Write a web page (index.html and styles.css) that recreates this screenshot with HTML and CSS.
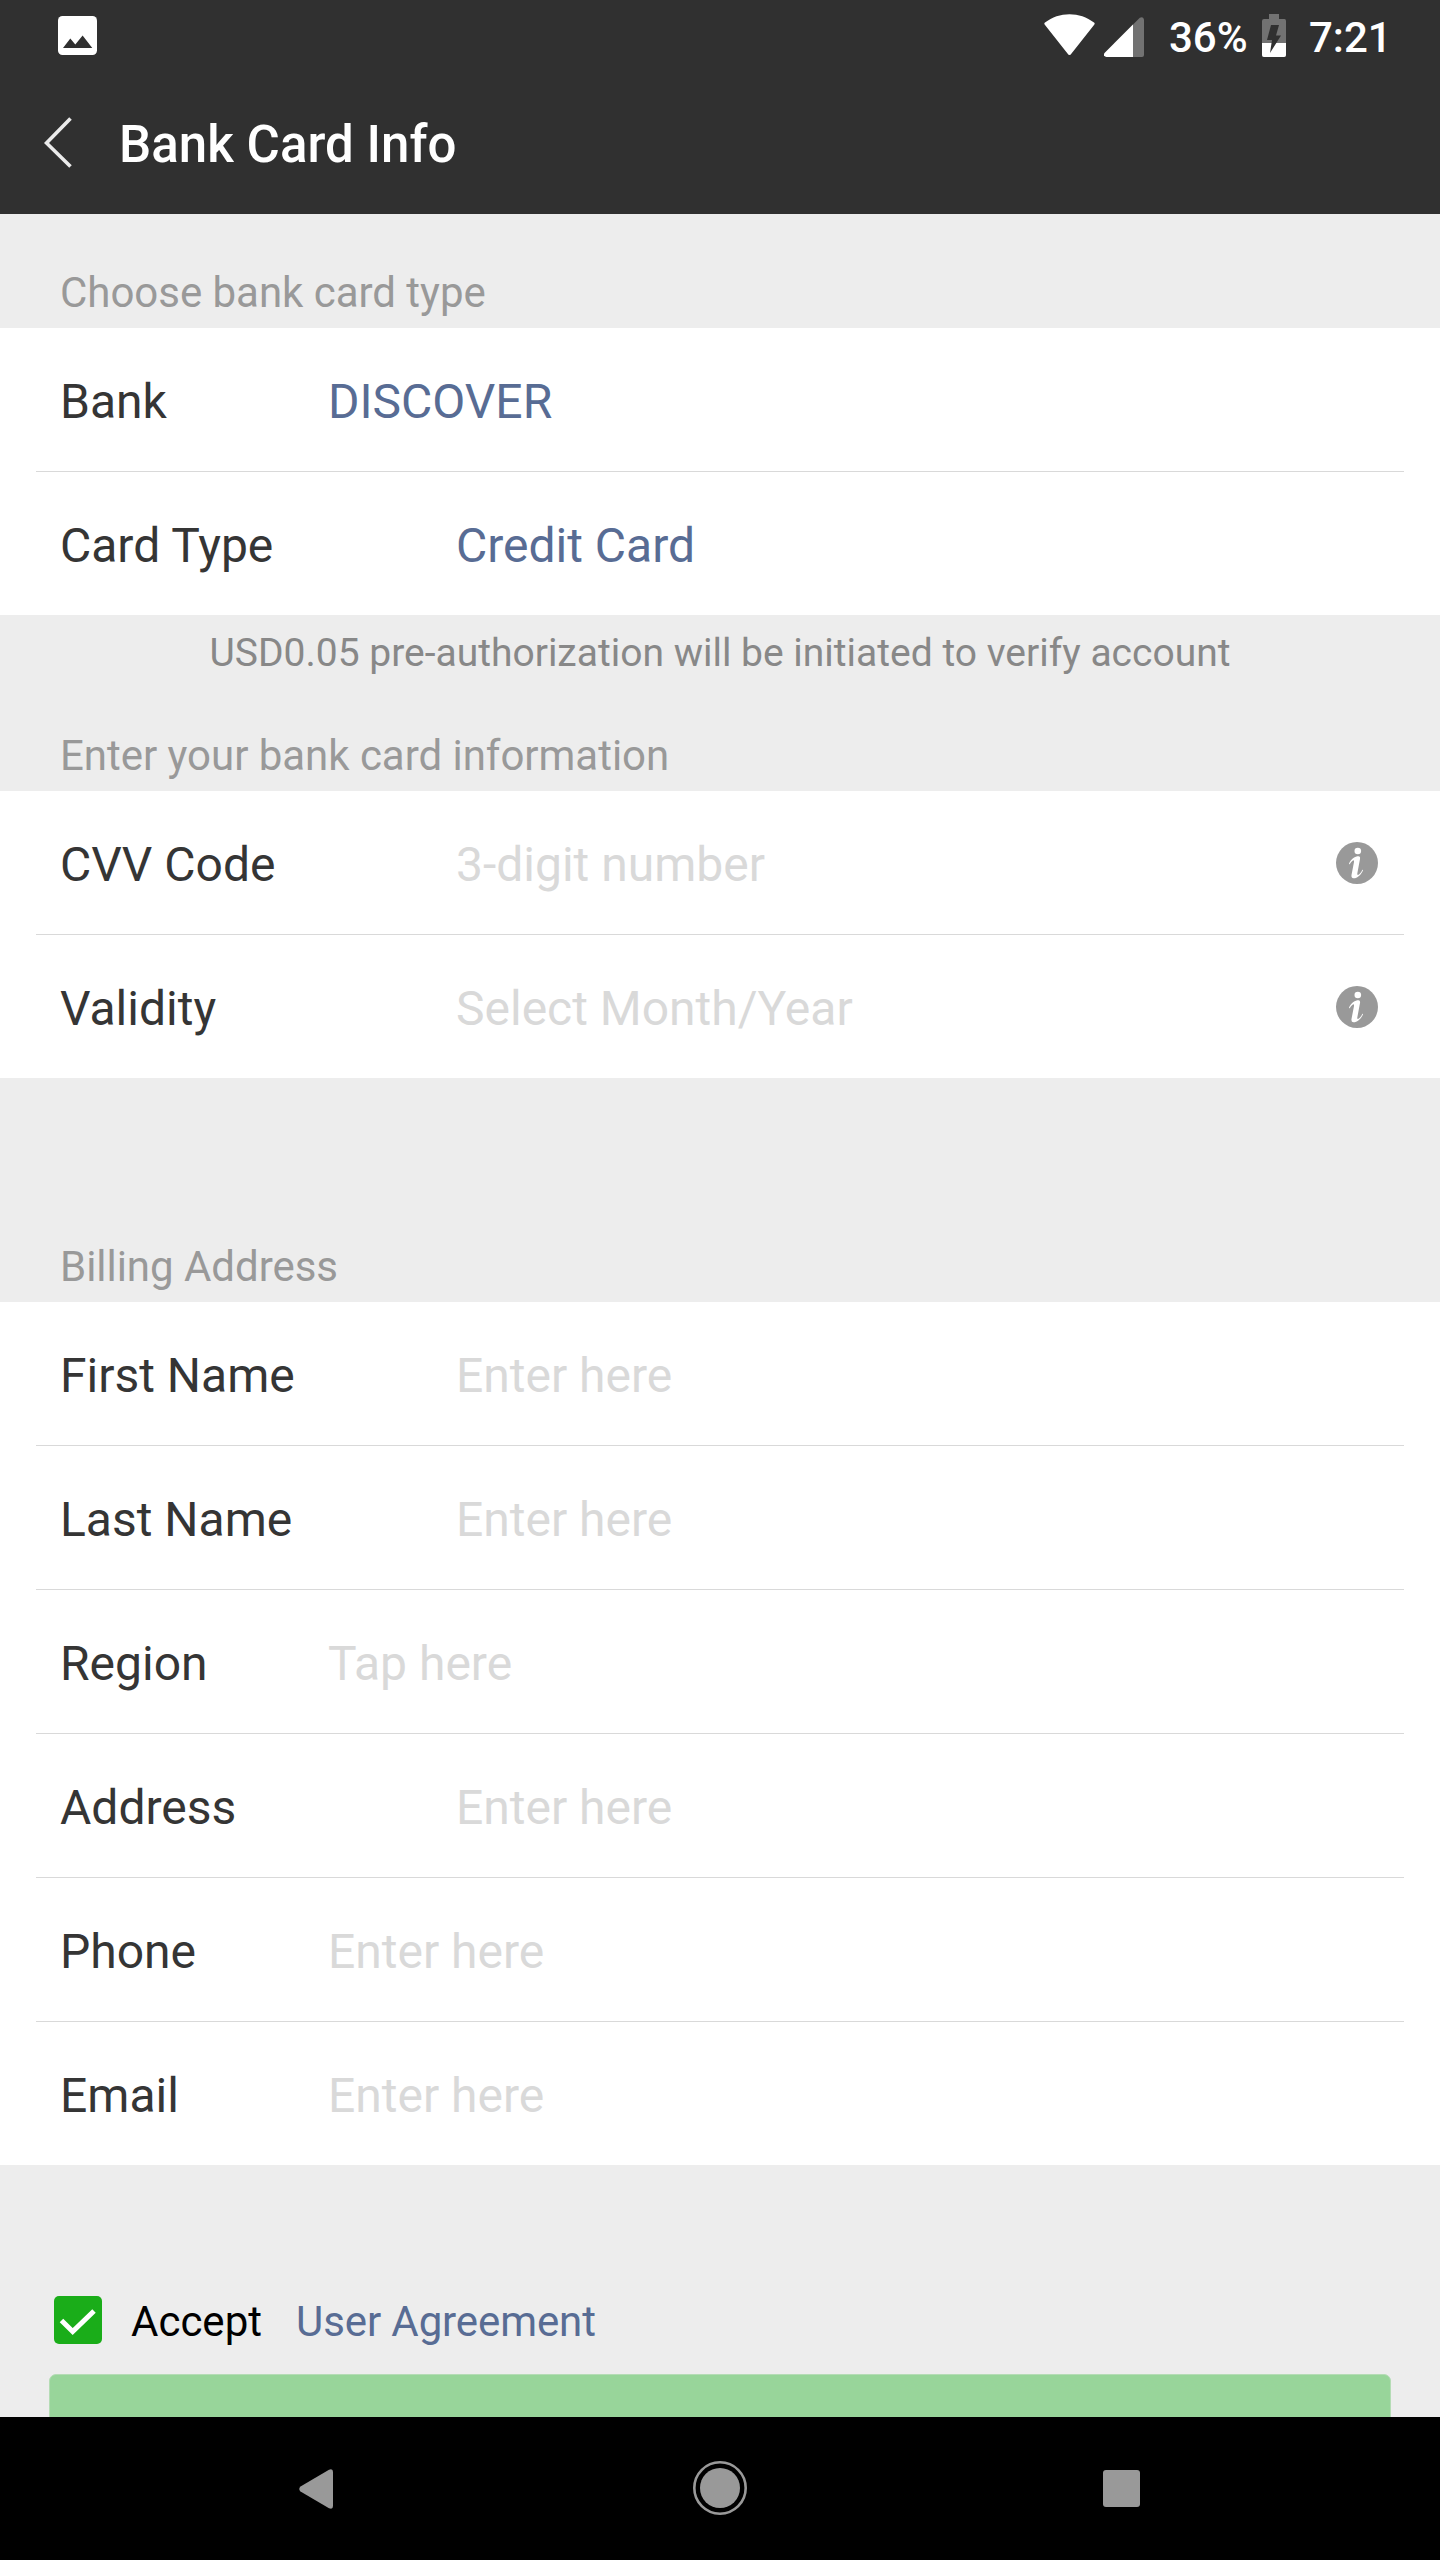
FILE: index.html
```html
<!DOCTYPE html>
<html lang="en">
<head>
<meta charset="utf-8">
<title>Bank Card Info</title>
<link rel="stylesheet" href="styles.css">
</head>
<body>
<div class="screen">
  <header class="header">
    <div class="status">
      <svg class="status-photo" width="39" height="39" viewBox="0 0 39 39"><rect width="39" height="39" rx="4.5" fill="#fff"/><path d="M5 32 12.3 22.6 17.3 28.6 24.6 19.6 34.3 32Z" fill="#303030"/></svg>
      <div class="status-right">
        <svg class="wifi" width="51" height="42" viewBox="0 0 51 42"><path d="M1 11Q-.4 9.600 1 8.600C15-2.600 36-2.600 50 8.600Q51.400 9.600 50 11L27.500 39.500Q25.500 42.500 23.500 39.500Z" fill="#fff"/></svg>
        <svg class="signal" width="40" height="40" viewBox="0 0 40 40"><path d="M2.500 40Q-1.500 39 .8 35.800L35.800.8Q39-1 40 2.500V38Q40 40 38 40Z" fill="#727272"/><path d="M2.500 40Q-1.500 39 .8 35.800L29 7.600V40Z" fill="#fff"/></svg>
        <span class="percent">36%</span>
        <svg class="battery" width="24" height="43" viewBox="0 0 24 43"><path d="M7 0H17V5H22.500Q24 5 24 7V41Q24 43 22 43H2Q0 43 0 41V7Q0 5 2 5H7Z" fill="#727272"/><path d="M0 29H24V41Q24 43 22 43H2Q0 43 0 41Z" fill="#fff"/><path d="M9 11H17L14 21.500H19L8 39 10 26H5Z" fill="#303030"/></svg>
        <span class="clock">7:21</span>
      </div>
    </div>
    <div class="titlebar">
      <svg class="back" width="30" height="52" viewBox="0 0 30 52"><path d="M26.500 1.500 2.500 26 26.500 49.500" fill="none" stroke="#ebebeb" stroke-width="3.600"/></svg>
      <h1 class="title">Bank Card Info</h1>
    </div>
  </header>
  <main class="content">
    <h2 class="section first">Choose bank card type</h2>
    <div class="card">
      <div class="row narrow"><span class="label">Bank</span><span class="value">DISCOVER</span></div>
      <div class="row"><span class="label">Card Type</span><span class="value">Credit Card</span></div>
    </div>
    <p class="note">USD0.05 pre-authorization will be initiated to verify account</p>
    <h2 class="section second">Enter your bank card information</h2>
    <div class="card">
      <div class="row"><span class="label">CVV Code</span><span class="hint">3-digit number</span>
        <svg class="info" width="42" height="42" viewBox="0 0 42 42"><circle cx="21" cy="21" r="21" fill="#999"/><circle cx="21.800" cy="9" r="3.300" fill="#fff"/><path d="M13 21.500C15.500 16.500 19 14.300 22.500 14.300Q24.500 14.300 24 17L21.300 31.500Q21 34 23.500 32 25.500 30.200 26.500 27.500L27 28.500C25 33 21 36.500 17.500 36.300Q15 36 15.500 33L18 20Q18.300 17 16.500 18.800 15 20 13.500 22.500Z" fill="#fff"/></svg></div>
      <div class="row"><span class="label">Validity</span><span class="hint">Select Month/Year</span>
        <svg class="info" width="42" height="42" viewBox="0 0 42 42"><circle cx="21" cy="21" r="21" fill="#999"/><circle cx="21.800" cy="9" r="3.300" fill="#fff"/><path d="M13 21.500C15.500 16.500 19 14.300 22.500 14.300Q24.500 14.300 24 17L21.300 31.500Q21 34 23.500 32 25.500 30.200 26.500 27.500L27 28.500C25 33 21 36.500 17.500 36.300Q15 36 15.500 33L18 20Q18.300 17 16.500 18.800 15 20 13.500 22.500Z" fill="#fff"/></svg></div>
    </div>
    <h2 class="section third">Billing Address</h2>
    <div class="card">
      <div class="row"><span class="label">First Name</span><span class="hint">Enter here</span></div>
      <div class="row"><span class="label">Last Name</span><span class="hint">Enter here</span></div>
      <div class="row narrow"><span class="label">Region</span><span class="hint">Tap here</span></div>
      <div class="row"><span class="label">Address</span><span class="hint">Enter here</span></div>
      <div class="row narrow"><span class="label">Phone</span><span class="hint">Enter here</span></div>
      <div class="row narrow"><span class="label">Email</span><span class="hint">Enter here</span></div>
    </div>
    <div class="agree">
      <svg class="check" width="48" height="48" viewBox="0 0 48 48"><rect width="48" height="48" rx="5" fill="#1aad19"/><path d="M7.500 24.500 18.700 35.500 40 15" fill="none" stroke="#fff" stroke-width="5"/></svg>
      <span class="accept">Accept</span>
      <a class="link">User Agreement</a>
    </div>
    <div class="button"></div>
  </main>
  <nav class="nav">
    <svg width="36" height="40" viewBox="0 0 36 40"><path d="M1.500 22.500Q-1 20 1.500 17.500L30 .8Q34-.8 34 3V37Q34 40.800 30 39.200Z" fill="#999"/></svg>
    <svg class="home" width="54" height="54" viewBox="0 0 54 54"><circle cx="27" cy="27" r="25.700" fill="none" stroke="#999" stroke-width="2.600"/><circle cx="27" cy="27" r="20" fill="#999"/></svg>
    <svg width="37" height="37" viewBox="0 0 37 37"><rect width="37" height="37" rx="3" fill="#999"/></svg>
  </nav>
</div>
</body>
</html>
```
FILE: styles.css
```css
* { box-sizing: border-box; margin: 0; padding: 0; }
body { background: #ededed; font-family: Roboto, sans-serif; font-weight: 400; }
svg { display: block; flex: none; }
span, a, h1, h2, p { white-space: nowrap; }
.screen { width: 1440px; height: 2560px; display: flex; flex-direction: column; overflow: hidden; }

.header { height: 214px; flex: none; background: #303030; color: #fff; }
.status { height: 72px; display: flex; justify-content: space-between; padding: 0 50px 0 58px; }
.status-photo { margin-top: 16px; }
.status-right { display: flex; align-items: flex-start; font-size: 42px; font-weight: 500; line-height: 50px; }
.wifi { margin-top: 14px; margin-right: 9px; }
.signal { margin-top: 17px; margin-right: 25px; }
.percent { margin-top: 13px; width: 79px; margin-right: 14px; }
.battery { margin-top: 14px; margin-right: 23px; }
.clock { margin-top: 13px; width: 81px; }
.titlebar { height: 142px; display: flex; align-items: center; padding-left: 44px; }
.back { margin-right: 45px; }
.title { padding-top: 4px; font-size: 51px; font-weight: 500; line-height: 60px; letter-spacing: 0.05px; }

.content { flex: 1; min-height: 0; overflow: hidden; }
.section { padding-left: 60px; font-size: 42px; font-weight: 400; line-height: 50px; letter-spacing: -0.03px; color: #999; }
.section.first { height: 114px; padding-top: 54px; }
.section.second { height: 102px; padding-top: 42px; }
.section.third { height: 224px; padding-top: 164px; }
.card { background: #fff; }
.row { position: relative; height: 143px; display: flex; align-items: center; padding: 0 62px 0 60px; font-size: 48px; }
.row + .row { height: 144px; padding-top: 1px; }
.row + .row::before { content: ""; position: absolute; top: 0; left: 36px; right: 36px; height: 1px; background: #d9d9d9; }
.label { width: 396px; color: #353535; }
.label, .value, .hint { padding-top: 4px; }
.narrow .label { width: 268px; }
.value { color: #586c94; }
.hint { color: #d9d9d9; }
.info { margin-top: 1px; margin-left: auto; }
.note { height: 74px; padding-top: 14px; text-align: center; font-size: 39px; line-height: 48px; color: #888; }
.agree { height: 209px; padding: 131px 0 0 54px; display: flex; align-items: flex-start; font-size: 42px; line-height: 48px; }
.accept, .link { padding-top: 2px; }
.accept { margin-left: 29px; width: 165px; color: #000; }
.link { color: #586c94; letter-spacing: -0.1px; }
.button { height: 80px; margin: 0 49px; border-radius: 7px; background: #98d59a; border: 1px solid #b5dcb5; }

.nav { height: 143px; flex: none; background: #000; display: flex; align-items: center; justify-content: space-between; padding: 0 300px 0 299px; }
.home { margin: 0 0 1px 2px; }
```
